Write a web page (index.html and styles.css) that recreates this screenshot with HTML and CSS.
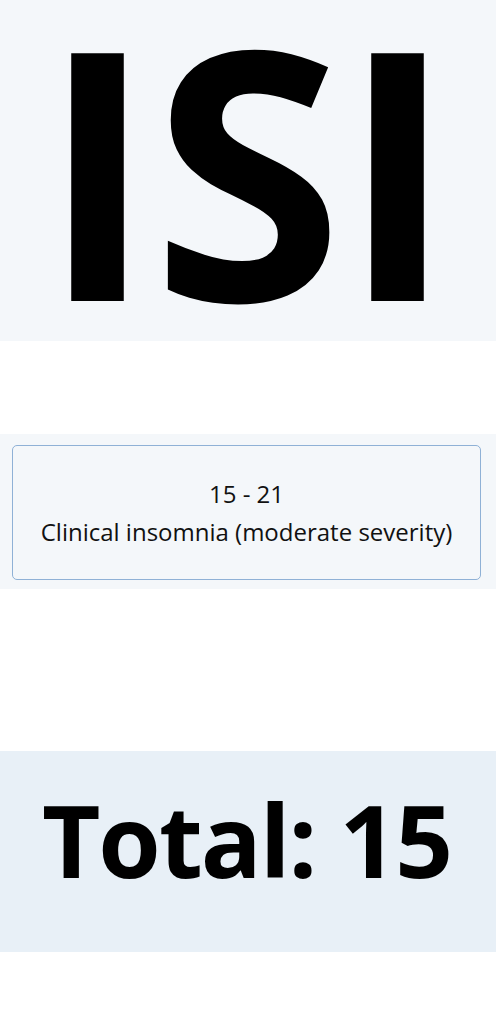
FILE: index.html
```html
<!DOCTYPE html>
<html lang="en">
<head>
<meta charset="utf-8">
<title>ISI</title>
<link rel="stylesheet" href="styles.css">
</head>
<body>
<header class="hero">
  <h1 class="hero-title">ISI</h1>
</header>
<section class="range">
  <div class="range-card">
    <div class="range-value">15 - 21</div>
    <div class="range-label">Clinical insomnia (moderate severity)</div>
  </div>
</section>
<section class="total">
  <h2 class="total-text">Total: 15</h2>
</section>
</body>
</html>
```
FILE: styles.css
```css
html, body {
  margin: 0;
  padding: 0;
  background: #ffffff;
  font-family: "Open Sans", "Noto Sans", sans-serif;
  color: #000;
}

.hero {
  height: 341px;
  box-sizing: border-box;
  padding-top: 17px;
  background: #f4f7fa;
  display: flex;
  align-items: flex-start;
  justify-content: center;
}

.hero-title {
  margin: 0;
  padding-right: 4px;
  font-size: 347px;
  font-weight: 700;
  line-height: 300px;
  letter-spacing: -3px;
  color: #000;
}

.range {
  margin-top: 93px;
  height: 155px;
  box-sizing: border-box;
  background: #f4f7fa;
  padding: 11px 15px 9px 12px;
}

.range-card {
  box-sizing: border-box;
  height: 135px;
  border: 1px solid #8fb1d6;
  border-radius: 5px;
  display: flex;
  flex-direction: column;
  align-items: center;
  justify-content: center;
  gap: 5px;
  color: #111;
}

.range-value,
.range-label {
  font-size: 24px;
  line-height: 33px;
}

.total {
  margin-top: 162px;
  height: 201px;
  box-sizing: border-box;
  padding-top: 38px;
  background: #e8f0f7;
  display: flex;
  align-items: flex-start;
  justify-content: center;
}

.total-text {
  margin: 0;
  padding-right: 3px;
  font-size: 101px;
  font-weight: 700;
  line-height: 101px;
  letter-spacing: -2px;
  color: #000;
}
```
